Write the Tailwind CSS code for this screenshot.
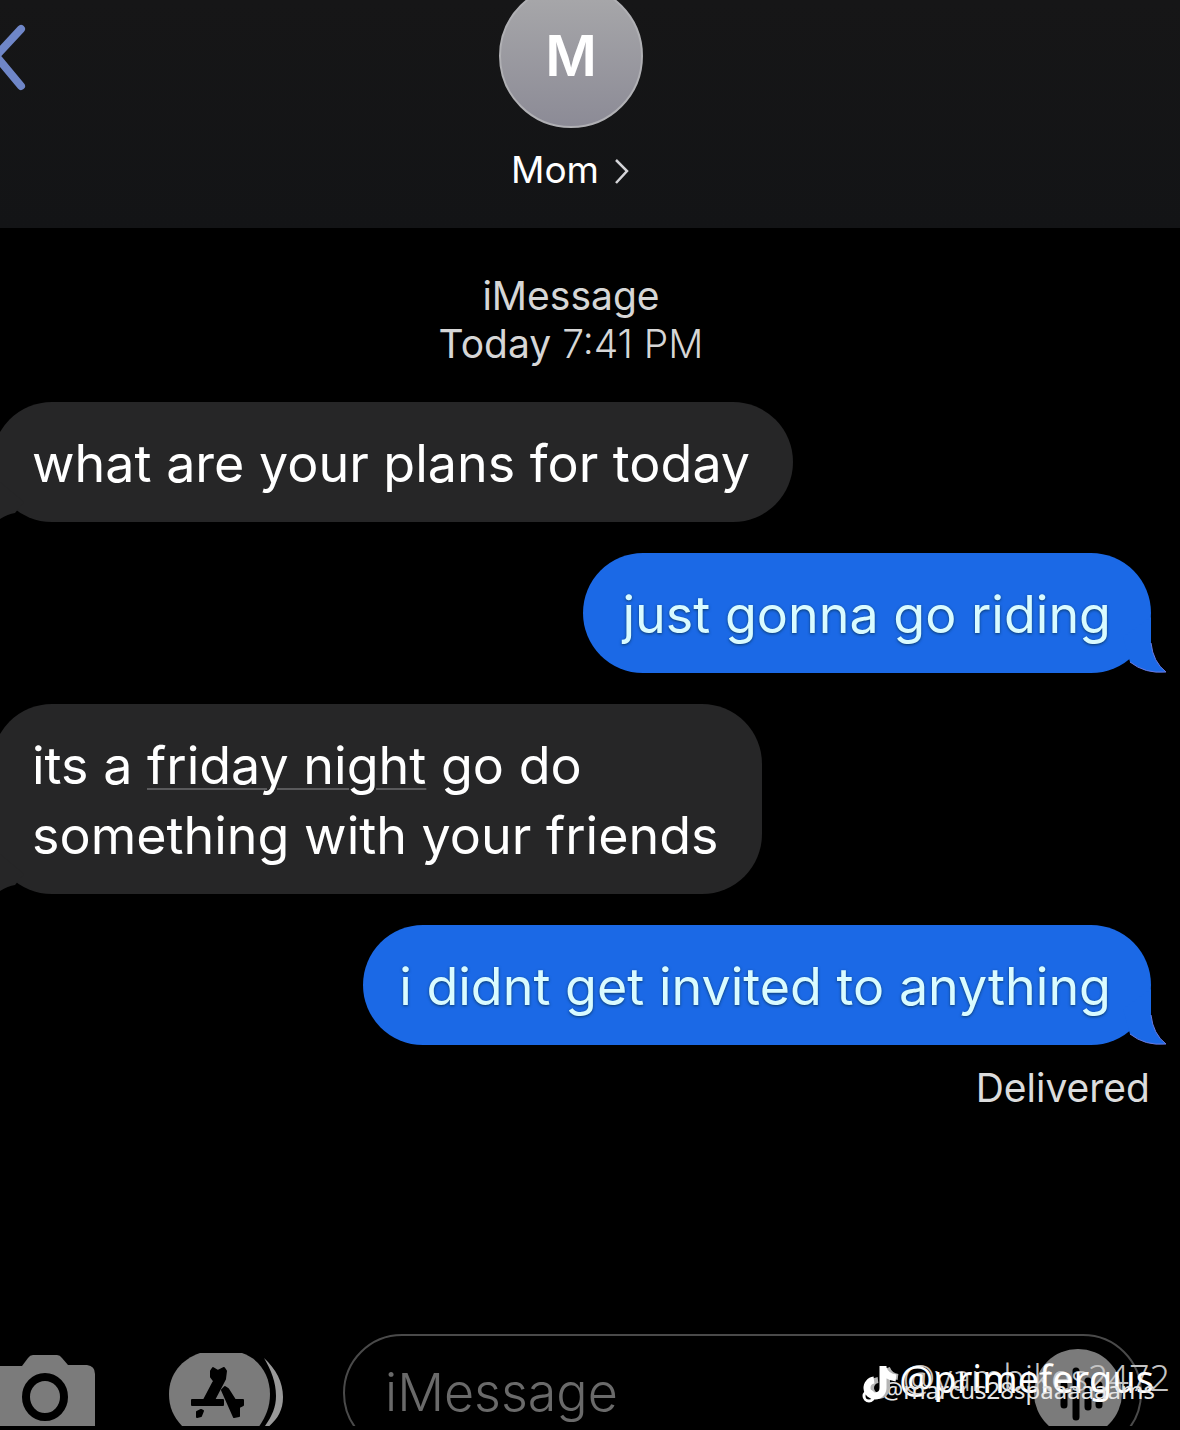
<!DOCTYPE html>
<html lang="en">
<head>
    <meta charset="UTF-8">
    <meta name="viewport" content="width=device-width, initial-scale=1.0">
    <title>Messages - Mom</title>
    <script src="https://cdn.jsdelivr.net/npm/@tailwindcss/browser@4"></script>
</head>
<body class="bg-black font-['Inter',sans-serif] text-white">

<div class="relative flex min-h-screen flex-col overflow-hidden">

    <!-- Contact header -->
    <header class="grid grid-cols-[1fr_auto_1fr] items-start bg-linear-to-b from-[#161617] to-[#131416] pr-[38px] pb-[34px]">
        <button type="button" aria-label="Back" class="mt-5">
            <svg class="h-[72px] w-7" viewBox="0 0 28 72" fill="none" stroke="#6f86c8" stroke-width="8" stroke-linecap="round" stroke-linejoin="round">
                <path d="M21 9 L-4 36 L21 66"/>
            </svg>
        </button>
        <div class="flex flex-col items-center">
            <div class="-mt-4 flex size-36 items-center justify-center rounded-full border-2 border-[#b0b0b4] bg-linear-to-b from-[#a9a9ab] to-[#8c8b96] text-[56px] font-semibold">M</div>
            <a href="#" class="mt-[18px] flex items-center gap-4 text-[37px] leading-[48px]">Mom
                <svg class="h-7 w-4" viewBox="0 0 16 28" fill="none" stroke="#d4d4d8" stroke-width="2.5">
                    <path d="M1 4 L12 15 L1 27"/>
                </svg>
            </a>
        </div>
    </header>

    <!-- Conversation -->
    <main class="flex flex-1 flex-col">
        <div class="mt-11 pr-[38px] text-center text-[39px] leading-[48px] text-[#d6d6d6]">
            <p>iMessage</p>
            <p>Today <span class="font-light">7:41 PM</span></p>
        </div>

        <div class="mt-[34px] flex flex-col gap-[31px] pr-[29px] text-[52px] leading-[70px]">
            <div class="relative -ml-2 self-start rounded-[60px] bg-[#262627] pt-[27px] pr-[43px] pb-[23px] pl-10">
                <svg class="absolute bottom-0 left-0 h-10 w-8" viewBox="0 0 32 40" fill="#262627"><path d="M8 0 V37 Q16 32 23 31 L32 20 Z"/></svg>
                <p class="relative">what are your plans for today</p>
            </div>
            <div class="relative self-end rounded-[60px] bg-[#1b69e6] pt-[27px] pr-10 pb-[23px] pl-10 text-[#d9fbff] text-shadow-[0_1px_3px_#0b3a6c]">
                <svg class="absolute -right-4 bottom-0 h-14 w-12" viewBox="0 0 48 56"><path d="M32 0 V26 Q34 45 47 55 Q26 57 11 45 L4 20 Z" fill="#1b69e6"/><path d="M32 26 Q34 45 47 55 Q26 57 11 45" fill="none" stroke="#6b7ae0"/></svg>
                <p class="relative">just gonna go riding</p>
            </div>
            <div class="relative -ml-2 self-start rounded-[60px] bg-[#262627] pt-[27px] pr-[43px] pb-[23px] pl-10">
                <svg class="absolute bottom-0 left-0 h-10 w-8" viewBox="0 0 32 40" fill="#262627"><path d="M8 0 V37 Q16 32 23 31 L32 20 Z"/></svg>
                <p class="relative">its a <span class="underline decoration-[#5a5a5c] decoration-2 underline-offset-4">friday night</span> go do<br>something with your friends</p>
            </div>
            <div class="relative self-end rounded-[60px] bg-[#1b69e6] pt-[27px] pr-10 pb-[23px] pl-9 text-[#d9fbff] text-shadow-[0_1px_3px_#0b3a6c]">
                <svg class="absolute -right-4 bottom-0 h-14 w-12" viewBox="0 0 48 56"><path d="M32 0 V26 Q34 45 47 55 Q26 57 11 45 L4 20 Z" fill="#1b69e6"/><path d="M32 26 Q34 45 47 55 Q26 57 11 45" fill="none" stroke="#6b7ae0"/></svg>
                <p class="relative">i didnt get invited to anything</p>
            </div>
        </div>
        <p class="mt-[19px] pr-[30px] text-right text-[39px] leading-[48px] text-[#dcdcdc]">Delivered</p>
    </main>

    <!-- Composer -->
    <footer class="mb-1 flex h-[92px] overflow-hidden">
        <button type="button" aria-label="Camera" class="mt-5 h-[72px] w-24 shrink-0">
            <svg class="h-[72px] w-24" viewBox="0 0 96 72">
                <path d="M-8 12 H22 L28 4 Q30 1 33 1 H57 Q60 1 62 4 L68 11 H87 Q95 12 95 20 V80 H-8 Z" fill="#7b7b7b"/>
                <ellipse cx="45" cy="43" rx="19" ry="20" fill="none" stroke="#000" stroke-width="8"/>
            </svg>
        </button>
        <button type="button" aria-label="Apps" class="mt-[18px] ml-[72px] h-[74px] w-[118px] shrink-0">
            <svg class="h-[74px] w-[118px]" viewBox="0 0 118 74">
                <path d="M32 1 H74 C92 7 102 24 102 42 C102 56 97 66 90 76 H16 C6 66 1 56 1 42 C1 22 14 7 32 1 Z" fill="#7b7b7b"/>
                <g fill="#000" stroke="#000" stroke-width="2" stroke-linejoin="round">
                    <path d="M43 19 L45 16 L50 19 L56 16 L58 19 L57 27 L46 48 H55 V53 H24 V48 H36 L46 29 L43 25 Z"/>
                    <path d="M54 38 L57 35 L60 37 L67 48 H75 V53 L71 55 V64 L66 65 Z"/>
                    <path d="M29 60 L33 58 L35 59 L33 64 L29 65 Z"/>
                </g>
                <path d="M96 6 C108 17 115 30 115 45 C115 59 109 68 99 76 L97 74 C104 64 108 55 108 44 C108 30 103 18 96 6 Z" fill="#999"/>
            </svg>
        </button>
        <div class="mr-[38px] ml-[57px] flex h-[118px] min-w-0 flex-1 items-center rounded-full border-2 border-[#4a4a4a] pr-[18px] pl-10">
            <input type="text" aria-label="Message" placeholder="iMessage" class="min-w-0 flex-1 bg-transparent text-[52px] font-light outline-none placeholder:text-[#6a6a6a]">
            <button type="button" aria-label="Record audio" class="size-[88px] shrink-0 rounded-full bg-[#7b7b7b]">
                <svg class="size-[88px]" viewBox="0 0 88 88" stroke="#000" stroke-width="7" stroke-linecap="round">
                    <path d="M30 36 V56 M42 22 V68 M54 32 V58 M65 36 V56"/>
                </svg>
            </button>
        </div>
    </footer>

    <!-- Account tags over the composer -->
    <div class="pointer-events-none absolute right-0 bottom-0 h-20 w-80 font-['Noto_Sans',sans-serif] whitespace-nowrap">
        <span class="absolute right-[10px] bottom-7 text-[36px] leading-[48px] font-light text-[#c4c4c4]">@yambikes2472</span>
        <span class="absolute right-[26px] bottom-7 text-[38px] leading-[48px]">@primefergus</span>
        <span class="absolute right-[25px] bottom-6 text-[24px] leading-[32px] text-[#e6e6e6]">@marcus28spaaaaaams</span>
        <svg class="absolute bottom-[26px] left-0 h-10 w-10" viewBox="0 0 40 40" fill="none">
            <path d="M27 4 V24 A8 8 0 1 1 18 16 M27 4 Q30 12 38 13" stroke="#b5b5b5" stroke-width="6"/>
            <path d="M23 2 V24 A8 8 0 1 1 14 16 M23 4 Q26 13 36 14" stroke="#fff" stroke-width="7"/>
            <circle cx="9" cy="32" r="5" stroke="#fff" stroke-width="3"/>
        </svg>
    </div>
</div>

</body>
</html>
